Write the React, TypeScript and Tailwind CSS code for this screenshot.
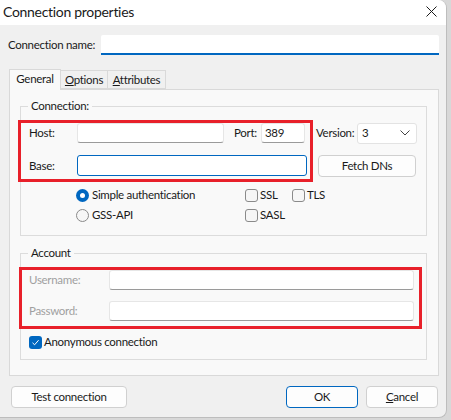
import React from "react";

const font = { fontFamily: 'Lato, "Segoe UI", sans-serif' };

const T = "text-[11.5px] tracking-[-0.3px]";

function TextBox({ w, value, focused, h = 20 }: { w: number; value?: string; focused?: boolean; h?: number }) {
  return (
    <div
      className={
        "flex items-center bg-white rounded-[3px] pl-[3px] text-[#1a1a1a] " +
        T +
        " " +
        (focused ? "border border-[#0067c0]" : "border border-[#e6e6e6] border-b-[#9a9a9a]")
      }
      style={{ width: w, height: h }}
    >
      {value}
    </div>
  );
}

function Check({ checked }: { checked?: boolean }) {
  return checked ? (
    <div className="w-[13px] h-[13px] shrink-0 rounded-[3px] bg-[#0067c0] flex items-center justify-center">
      <svg width="9" height="9" viewBox="0 0 9 9">
        <path d="M1.5 4.8 L3.6 6.8 L7.6 2.2" stroke="white" strokeWidth="1" fill="none" />
      </svg>
    </div>
  ) : (
    <div className="w-[13px] h-[13px] shrink-0 rounded-[3px] border border-[#8a8a8a] bg-[#f6f6f6]" />
  );
}

function Radio({ checked }: { checked?: boolean }) {
  return checked ? (
    <div className="w-[13px] h-[13px] shrink-0 rounded-full bg-[#0067c0] flex items-center justify-center">
      <div className="w-[5px] h-[5px] rounded-full bg-white" />
    </div>
  ) : (
    <div className="w-[13px] h-[13px] shrink-0 rounded-full border border-[#8a8a8a] bg-[#f6f6f6]" />
  );
}

function Button({ w, children, primary }: { w: number; children: React.ReactNode; primary?: boolean }) {
  return (
    <div
      className={
        "h-[22px] flex items-center justify-center rounded-[4px] bg-[#fdfdfd] text-[#1a1a1a] whitespace-nowrap " +
        T +
        " " +
        (primary ? "border border-[#0067c0]" : "border border-[#d0d0d0]")
      }
      style={{ width: w }}
    >
      {children}
    </div>
  );
}

const lbl = T + " text-[#1a1a1a] whitespace-nowrap";

export default function App() {
  return (
    <div className="w-[451px] h-[420px] bg-[#d8d8d8] overflow-hidden" style={font}>
      <div className="w-[447px] h-[418px] bg-[#f0f0f0] rounded-tr-[8px] rounded-br-[8px] border-r border-b border-[#bdbdbd] flex flex-col relative">
        {/* Title bar */}
        <div className="h-[25px] bg-white rounded-tr-[8px] flex items-center justify-between pl-[3px] pr-[8px]">
          <span className="text-[14px] tracking-[-0.3px] text-[#1a1a1a] leading-none -mt-[2px] whitespace-nowrap">Connection properties</span>
          <svg width="11" height="11" viewBox="0 0 11 11" className="mr-[1px] -mt-[2px]">
            <path d="M0.5 0.5 L10.5 10.5 M10.5 0.5 L0.5 10.5" stroke="#1a1a1a" strokeWidth="1" />
          </svg>
        </div>

        <div className="pl-[8px] pr-[7px]">
          {/* Connection name */}
          <div className="mt-[10px] flex items-center h-[20px]">
            <span className={lbl + " w-[93px] shrink-0"}>Connection name:</span>
            <div className="flex-1 h-[20px] bg-white border-b-2 border-[#0067c0] rounded-t-[2px]" />
          </div>

          {/* Tabs */}
          <div className="mt-[13px] flex items-end h-[21px] ml-[1px]">
            <div className={lbl + " w-[52px] h-[21px] bg-[#f9f9f9] border border-b-0 border-[#d9d9d9] flex items-center justify-center relative z-10 -mb-px pb-[2px]"}>
              General
            </div>
            <div className={lbl + " w-[47px] h-[19px] border border-l-0 border-[#d9d9d9] bg-[#f0f0f0] flex items-center justify-center"}>
              <span><span className="underline">O</span>ptions</span>
            </div>
            <div className={lbl + " w-[58px] h-[19px] border border-l-0 border-[#d9d9d9] bg-[#f0f0f0] flex items-center justify-center"}>
              <span><span className="underline">A</span>ttributes</span>
            </div>
          </div>

          {/* Panel */}
          <div className="ml-[1px] h-[287px] border border-[#d9d9d9] bg-[#f9f9f9] pt-[16px] pl-[10px] pr-[11px] relative">
            {/* Connection group */}
            <div className="h-[130px] border border-[#dcdcdc] relative">
              <span className={lbl + " absolute -top-[9px] left-[7px] bg-[#f9f9f9] px-[3px] leading-[16px]"}>
                Connection:
              </span>
              <div className="mt-[16px] pl-[8px] flex items-center h-[20px]">
                <span className={lbl + " w-[48px] shrink-0"}>Host:</span>
                <TextBox w={147} />
                <span className={lbl + " ml-[10px] w-[27px] shrink-0"}>Port:</span>
                <TextBox w={44} value="389" />
                <span className={lbl + " ml-[11px] w-[41px] shrink-0"}>Version:</span>
                <div className={T + " w-[60px] h-[21px] bg-white border border-[#e3e3e3] rounded-[3px] flex items-center justify-between pl-[4px] pr-[6px] text-[#1a1a1a]"}>
                  <span>3</span>
                  <svg width="10" height="6" viewBox="0 0 10 6">
                    <path d="M0.5 0.5 L5 5 L9.5 0.5" stroke="#444" strokeWidth="1" fill="none" />
                  </svg>
                </div>
              </div>
              <div className="mt-[12px] pl-[8px] flex items-center h-[21px]">
                <span className={lbl + " w-[48px] shrink-0"}>Base:</span>
                <TextBox w={230} h={21} focused />
                <div className="ml-[11px]">
                  <Button w={98}>Fetch DNs</Button>
                </div>
              </div>
              <div className="mt-[10px] flex items-center h-[18px]">
                <div className="ml-[55px] w-[169px] flex items-center gap-[3px]">
                  <Radio checked />
                  <span className={lbl}>Simple authentication</span>
                </div>
                <div className="w-[47px] flex items-center gap-[2px]">
                  <Check />
                  <span className={lbl}>SSL</span>
                </div>
                <div className="flex items-center gap-[2px]">
                  <Check />
                  <span className={lbl}>TLS</span>
                </div>
              </div>
              <div className="mt-[2px] flex items-center h-[18px]">
                <div className="ml-[55px] w-[169px] flex items-center gap-[3px]">
                  <Radio />
                  <span className={lbl}>GSS-API</span>
                </div>
                <div className="flex items-center gap-[2px]">
                  <Check />
                  <span className={lbl}>SASL</span>
                </div>
              </div>
            </div>

            {/* Account group */}
            <div className="mt-[17px] h-[107px] border border-[#dcdcdc] relative">
              <span className={lbl + " absolute -top-[9px] left-[7px] bg-[#f9f9f9] px-[3px] leading-[16px]"}>
                Account
              </span>
              <div className="mt-[16px] pl-[8px] flex items-center h-[20px]">
                <span className={T + " w-[80px] text-[#a0a0a0] whitespace-nowrap"}>Username:</span>
                <TextBox w={305} />
              </div>
              <div className="mt-[11px] pl-[8px] flex items-center h-[20px]">
                <span className={T + " w-[80px] text-[#a0a0a0] whitespace-nowrap"}>Password:</span>
                <TextBox w={305} />
              </div>
              <div className="mt-[12px] pl-[8px] flex items-center gap-[2px] h-[18px]">
                <Check checked />
                <span className={lbl}>Anonymous connection</span>
              </div>
            </div>
          </div>

          {/* Buttons */}
          <div className="mt-[10px] flex items-center ml-[3px]">
            <Button w={116}>Test connection</Button>
            <div className="ml-auto flex gap-[8px] mr-[1px]">
              <Button w={72} primary>OK</Button>
              <Button w={72}>
                <span><span className="underline">C</span>ancel</span>
              </Button>
            </div>
          </div>
        </div>

        {/* Annotation overlays */}
        <div className="absolute left-[18px] top-[120px] w-[295px] h-[62px] border-[3px] border-[#e8202a] pointer-events-none" />
        <div className="absolute left-[19px] top-[267px] w-[403px] h-[62px] border-[3px] border-[#e8202a] pointer-events-none" />
      </div>
    </div>
  );
}
